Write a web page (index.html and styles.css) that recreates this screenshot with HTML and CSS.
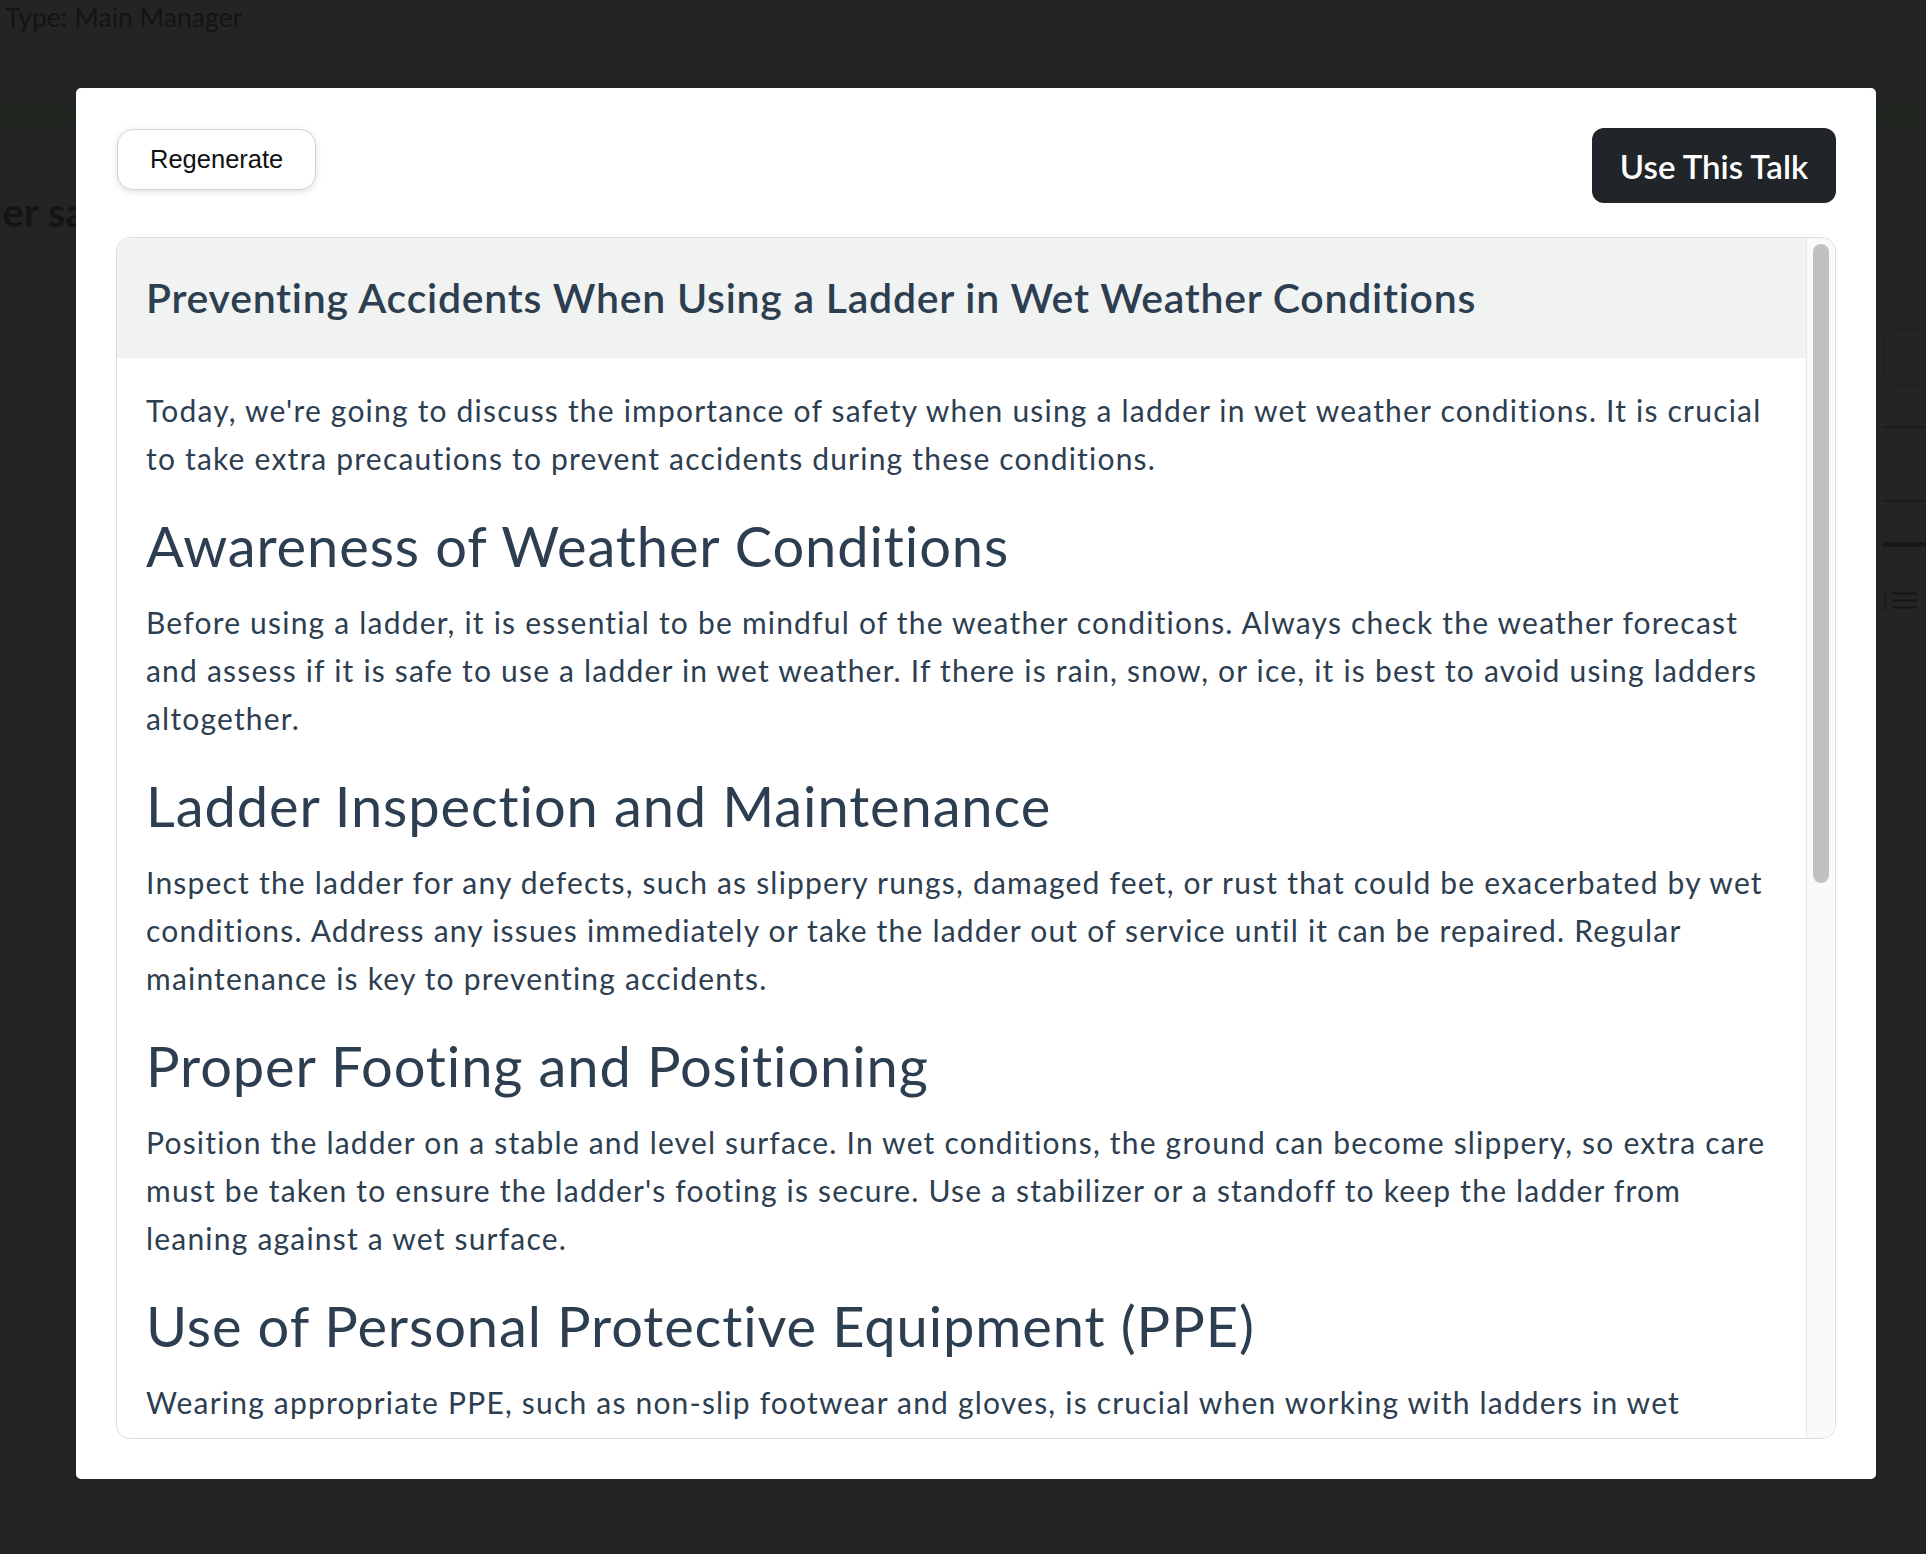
FILE: index.html
```html
<!DOCTYPE html>
<html lang="en">
<head>
  <meta charset="UTF-8">
  <title>Toolbox Talk Generator</title>
  <link rel="stylesheet" href="styles.css">
</head>
<body>
  <div class="page">
    <div class="page-type">Type: Main Manager</div>
    <div class="page-bar"></div>
    <div class="page-body">
      <h2 class="page-title">Ladder safety</h2>
      <div class="page-side">
        <div class="side-input"></div>
        <div class="side-row side-row-short"></div>
        <div class="side-row"></div>
        <div class="side-row side-row-last"></div>
        <div class="side-toolbar">
          <svg class="list-icon" width="34" height="22" viewBox="0 0 34 22">
            <text x="0" y="7" font-size="7" font-family="Liberation Sans, sans-serif" fill="currentColor">1</text>
            <text x="0" y="14" font-size="7" font-family="Liberation Sans, sans-serif" fill="currentColor">2</text>
            <text x="0" y="21" font-size="7" font-family="Liberation Sans, sans-serif" fill="currentColor">3</text>
            <line x1="9" y1="4.5" x2="34" y2="4.5" stroke="currentColor" stroke-width="2"/>
            <line x1="9" y1="11.5" x2="34" y2="11.5" stroke="currentColor" stroke-width="2"/>
            <line x1="9" y1="18.5" x2="34" y2="18.5" stroke="currentColor" stroke-width="2"/>
          </svg>
        </div>
      </div>
    </div>
  </div>

  <div class="backdrop">
    <div class="modal">
      <div class="modal-actions">
        <button class="btn btn-light">Regenerate</button>
        <button class="btn btn-dark">Use This Talk</button>
      </div>

      <div class="talk">
        <div class="talk-scroll">
          <div class="talk-header">
            <h3>Preventing Accidents When Using a Ladder in Wet Weather Conditions</h3>
          </div>
          <div class="talk-body">
            <p>Today, we're going to discuss the importance of safety when using a ladder in wet weather conditions. It is crucial to take extra precautions to prevent accidents during these conditions.</p>

            <h2>Awareness of Weather Conditions</h2>
            <p>Before using a ladder, it is essential to be mindful of the weather conditions. Always check the weather forecast and assess if it is safe to use a ladder in wet weather. If there is rain, snow, or ice, it is best to avoid using ladders altogether.</p>

            <h2>Ladder Inspection and Maintenance</h2>
            <p>Inspect the ladder for any defects, such as slippery rungs, damaged feet, or rust that could be exacerbated by wet conditions. Address any issues immediately or take the ladder out of service until it can be repaired. Regular maintenance is key to preventing accidents.</p>

            <h2>Proper Footing and Positioning</h2>
            <p>Position the ladder on a stable and level surface. In wet conditions, the ground can become slippery, so extra care must be taken to ensure the ladder's footing is secure. Use a stabilizer or a standoff to keep the ladder from leaning against a wet surface.</p>

            <h2>Use of Personal Protective Equipment (PPE)</h2>
            <p>Wearing appropriate PPE, such as non-slip footwear and gloves, is crucial when working with ladders in wet weather. These items can provide better grip and stability, reducing the risk of slipping and falling.</p>

            <h2>Safe Climbing Practices</h2>
            <p>Always maintain three points of contact while climbing, keep your body centered between the side rails, and never overreach. Wipe your hands and boots before climbing, and move slowly and deliberately on wet rungs.</p>

            <h2>Conclusion</h2>
            <p>Wet weather adds extra risk to every ladder task. By staying aware of conditions, inspecting equipment, securing proper footing and wearing the right PPE, we can all get the job done and go home safely.</p>
          </div>
        </div>
        <div class="talk-track"><div class="talk-thumb"></div></div>
      </div>
    </div>
  </div>
</body>
</html>
```

FILE: styles.css
```css
html, body { margin: 0; height: 100%; }
body { background: #5a5a5a; font-family: "Lato", "Noto Sans", sans-serif; overflow: hidden; }

/* page behind the dialog */
.page { color: #343434; }
.page-type { font-size: 26.5px; line-height: 30px; padding: 2px 0 0 5px; height: 104px; box-sizing: border-box; }
.page-bar { height: 20px; margin-top: 2px; background: #4e6250; }
.page-body { display: flex; align-items: flex-start; }
.page-title {
  font-size: 40px;
  line-height: 48px;
  font-weight: 700;
  margin: 62px 0 0 -84px;
  white-space: nowrap;
}
.page-side { margin-left: auto; margin-right: -357px; width: 400px; padding-top: 203px; }
.side-input { height: 55px; border: 1px solid #4a4a4a; border-radius: 14px; }
.side-row { height: 72px; border-bottom: 2px solid #474747; }
.side-row-short { height: 40px; }
.side-row-last { height: 40px; border-bottom: 5px solid #3a3a3a; }
.side-toolbar { padding-top: 42px; color: #333; }
.list-icon { display: block; }

/* dialog */
.backdrop { position: fixed; inset: 0; background: rgba(0, 0, 0, 0.6); }
.modal {
  margin: 88px 0 0 76px;
  width: 1800px;
  height: 1391px;
  box-sizing: border-box;
  padding: 40px;
  background: #fff;
  border-radius: 5px;
  display: flex;
  flex-direction: column;
}
.modal-actions {
  display: flex;
  justify-content: space-between;
  align-items: flex-start;
  margin: 1px 0 34px;
}
.btn { cursor: pointer; box-sizing: border-box; }
.btn-light {
  height: 61px;
  padding: 0 32px;
  margin-left: 1px;
  background: #fff;
  color: #111;
  border: 1px solid #d3d3d3;
  border-radius: 16px;
  box-shadow: 0 2px 7px rgba(0, 0, 0, 0.12);
  font-family: "Liberation Sans", Arial, sans-serif;
  font-size: 25.5px;
}
.btn-dark {
  height: 75px;
  width: 244px;
  margin-top: -1px;
  background: #212529;
  color: #fff;
  border: none;
  border-radius: 12px;
  font-family: "Lato", sans-serif;
  font-weight: 600;
  font-size: 33px;
}

.talk {
  flex: 1;
  min-height: 0;
  display: flex;
  border: 1px solid #dedede;
  border-radius: 14px;
  overflow: hidden;
  color: #2c3e50;
}
.talk-scroll { flex: 1; overflow: hidden; }
.talk-header { background: #f1f3f3; padding: 30px 29px; }
.talk-header h3 { margin: 0; font-size: 41px; line-height: 60px; font-weight: 600; letter-spacing: 0.74px; }
.talk-body { padding: 28px 31px 40px 29px; }
.talk-body p { margin: 0; font-size: 30px; line-height: 48px; letter-spacing: 1.2px; }
.talk-body h2 { margin: 31px 0 20px; font-size: 56px; line-height: 65px; font-weight: 400; letter-spacing: 0.9px; }

.talk-track {
  flex: none;
  width: 29px;
  box-sizing: border-box;
  padding: 6px;
  background: #fafafa;
  border-left: 1px solid #e8e8e8;
}
.talk-thumb { height: 639px; background: #c1c1c1; border-radius: 8px; }
```
